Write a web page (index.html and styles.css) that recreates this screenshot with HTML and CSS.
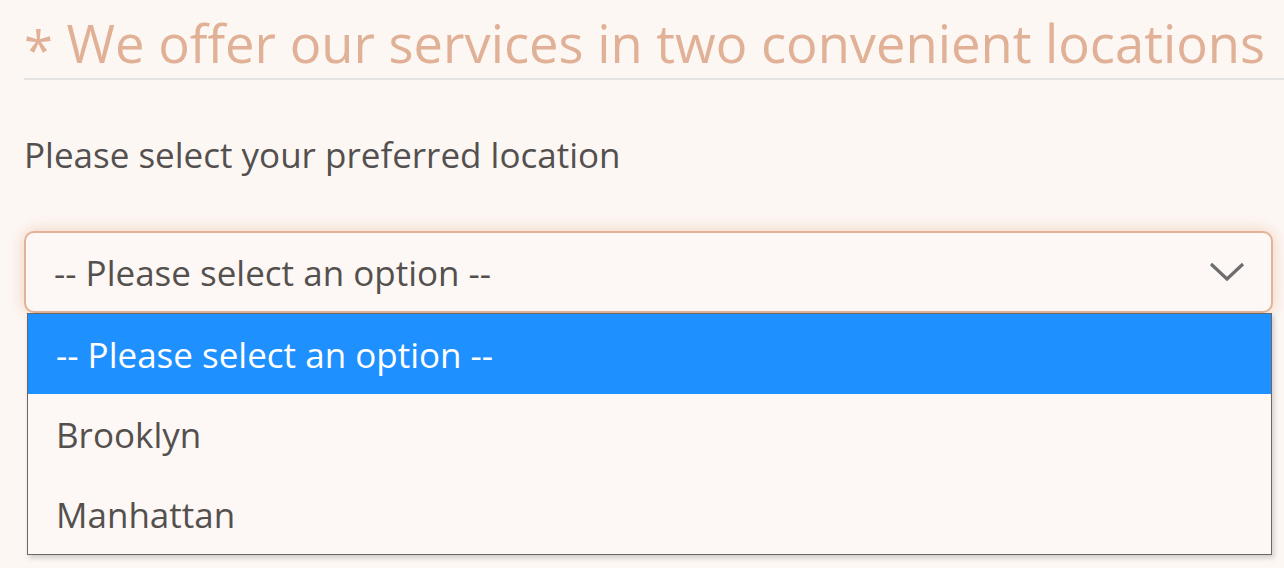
FILE: index.html
```html
<!DOCTYPE html>
<html>
<head>
<meta charset="utf-8">
<link rel="stylesheet" href="styles.css">
</head>
<body>
<div class="page">
  <div class="legend"><span class="star">*</span> We offer our services in two convenient locations</div>
  <div class="label">Please select your preferred location</div>
  <div class="select-wrap">
    <div class="select">
      <span class="value">-- Please select an option --</span>
      <svg class="chev" width="36" height="20" viewBox="0 0 36 20"><path d="M2 2 L18 17 L34 2" fill="none" stroke="#6e6e6e" stroke-width="3.2"/></svg>
    </div>
    <div class="menu">
      <div class="opt active">-- Please select an option --</div>
      <div class="opt">Brooklyn</div>
      <div class="opt">Manhattan</div>
    </div>
  </div>
</div>
</body>
</html>
```
FILE: styles.css
```css
html, body {
  margin: 0;
  padding: 0;
  background: #fdf7f4;
  overflow: hidden;
}
body {
  font-family: "Open Sans", sans-serif;
  width: 1284px;
  height: 568px;
}
.page {
  display: flex;
  flex-direction: column;
  padding-left: 24px;
}
.legend {
  color: #e0b196;
  font-size: 52.5px;
  line-height: 70px;
  margin-top: 8px;
  padding-bottom: 0;
  border-bottom: 2px solid #e6e3e3;
  white-space: nowrap;
}
.star {
  display: inline-block;
  transform: translateY(6px);
}
.label {
  color: #53504f;
  font-size: 35px;
  line-height: 44px;
  margin-top: 53px;
}
.select-wrap {
  margin-top: 54px;
  width: 1249px;
  position: relative;
}
.select {
  height: 82px;
  box-sizing: border-box;
  border: 2px solid #e2b396;
  border-radius: 10px;
  background: #fdf8f5;
  box-shadow: 0 0 16px rgba(225, 160, 120, 0.45);
  display: flex;
  align-items: center;
  justify-content: space-between;
  padding: 0 26px 0 28px;
  color: #54504e;
  font-size: 35px;
}
.chev {
  display: block;
}
.menu {
  position: absolute;
  left: 3px;
  top: 82px;
  width: 1245px;
  box-sizing: border-box;
  border: 1px solid #6a6866;
  background: #fdf8f5;
  box-shadow: 2px 3px 5px rgba(0, 0, 0, 0.18);
}
.opt {
  height: 80px;
  display: flex;
  align-items: center;
  padding-left: 28px;
  font-size: 35px;
  color: #54504e;
}
.opt.active {
  background: #1e90ff;
  color: #ffffff;
}
```
